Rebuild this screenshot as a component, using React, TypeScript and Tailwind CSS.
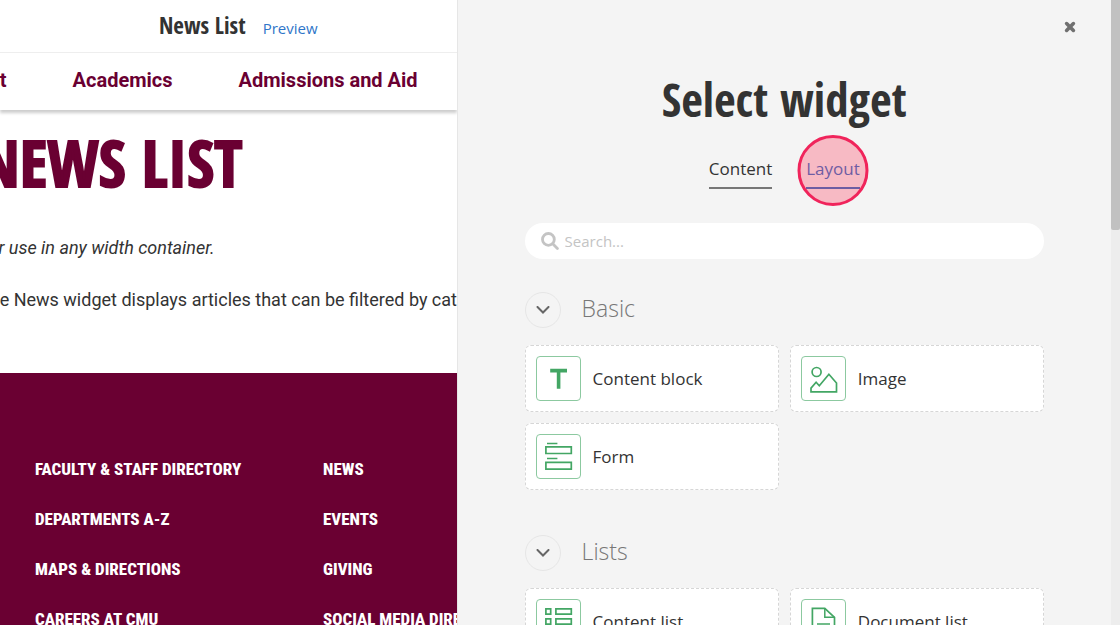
import { useState } from "react";

type IconName = "text" | "image" | "form" | "list" | "document";

type Widget = {
  name: string;
  icon: IconName;
};

type WidgetGroup = {
  title: string;
  widgets: Widget[];
};

const groups: WidgetGroup[] = [
  {
    title: "Basic",
    widgets: [
      { name: "Content block", icon: "text" },
      { name: "Image", icon: "image" },
      { name: "Form", icon: "form" },
    ],
  },
  {
    title: "Lists",
    widgets: [
      { name: "Content list", icon: "list" },
      { name: "Document list", icon: "document" },
    ],
  },
];

const footerLinks = [
  ["Faculty & Staff Directory", "Departments A-Z", "Maps & Directions", "Careers at CMU"],
  ["News", "Events", "Giving", "Social Media Directory"],
];

function WidgetIcon({ icon }: { icon: IconName }) {
  return (
    <svg viewBox="0 0 43 43" className="size-[43px]" fill="none" stroke="#43a664" strokeWidth="1.7" aria-hidden="true">
      {icon === "text" && <path d="M13.2 11.8h16.8v3.6h-6.6v16.4h-3.6V15.4h-6.6z" fill="#43a664" stroke="none" />}
      {icon === "image" && (
        <>
          <circle cx="14.6" cy="15" r="4.5" />
          <path d="M9 34.8v-3.7l5.1-5.8 3.2 3.5 9.6-11.6 7.6 8.8v8.8z" />
        </>
      )}
      {icon === "form" && (
        <>
          <path d="M10 8.5h10.4M10 23.5h10.4" strokeWidth="1.5" />
          <path d="M8.9 11.9h25.4v6.6H8.9zM8.9 27.3h25.4v6.9H8.9z" />
        </>
      )}
      {icon === "list" && (
        <>
          <path d="M8.9 8.9h4.8v5.2H8.9zM18.9 8.9h15.4v5.2H18.9z" />
          <path d="M8.9 18.9h4.8v5.2H8.9zM18.9 18.9h15.4v5.2H18.9z" />
          <path d="M8.9 28.9h4.8v5.2H8.9zM18.9 28.9h15.4v5.2H18.9z" />
        </>
      )}
      {icon === "document" && (
        <>
          <path d="M10.4 8.4h12.4l9.7 9v17H10.4z" />
          <path d="M22.8 8.4v8.8h9.5" strokeWidth="1.5" />
          <path d="M15 24h13M15 29h13" strokeWidth="1.5" />
        </>
      )}
    </svg>
  );
}

function WidgetSection({ group }: { group: WidgetGroup }) {
  const [open, setOpen] = useState(true);

  return (
    <section>
      <div className="flex items-start gap-[21px]">
        <button
          type="button"
          aria-label={`Toggle ${group.title}`}
          aria-expanded={open}
          onClick={() => setOpen(!open)}
          className="flex size-9 shrink-0 items-center justify-center rounded-full border border-[#e6e6e6]"
        >
          <svg viewBox="0 0 14 8" className="h-2 w-3.5" fill="none" stroke="#666" strokeWidth="2" aria-hidden="true">
            <path d="M1.5 1l5.5 5.5L12.5 1" strokeLinecap="round" />
          </svg>
        </button>
        <h2 className="text-[23px] leading-8 font-light text-[#777]">{group.title}</h2>
      </div>
      {open && (
        <div className="mt-[17px] grid grid-cols-2 gap-[11px]">
          {group.widgets.map((widget) => (
            <button
              key={widget.name}
              type="button"
              className="flex h-[67px] items-center gap-3 rounded-md border border-dashed border-[#d6d6d6] bg-white px-[10px] text-left text-[17px] leading-6 text-[#333]"
            >
              <span className="rounded-sm border border-[#8cc9a0]">
                <WidgetIcon icon={widget.icon} />
              </span>
              {widget.name}
            </button>
          ))}
        </div>
      )}
    </section>
  );
}

function SitePage() {
  return (
    <div className="min-w-0 flex-[457] overflow-hidden bg-white">
      <div className="flex h-[52px] items-baseline justify-end gap-[17px] pt-[9px] pr-[139px] leading-8">
        <span className="font-['Open_Sans_Condensed',sans-serif] text-[23px] font-bold text-[#333]">News List</span>
        <a href="#preview" className="text-[15px] text-[#2f76c9]">Preview</a>
      </div>
      <nav className="flex h-[58px] items-center justify-end gap-[66px] border-t border-[#eee] pr-[39px] pb-1 font-[Roboto,sans-serif] text-xl font-bold whitespace-nowrap text-[#6a0032] shadow-[0_3px_3px_rgba(0,0,0,0.2)]">
        <a href="#about">About</a>
        <a href="#academics">Academics</a>
        <a href="#admissions">Admissions and Aid</a>
      </nav>
      <main className="-ml-[21px] h-[263px] pt-5 font-[Roboto,sans-serif] text-[18px] leading-7 whitespace-nowrap text-[#333]">
        <h1 className="font-['Open_Sans_Condensed',sans-serif] text-[65px] leading-16 font-black text-[#6a0032] uppercase [-webkit-text-stroke:2px_#6a0032]">
          News List
        </h1>
        <p className="mt-10 italic">For use in any width container.</p>
        <p className="mt-6">The News widget displays articles that can be filtered by category</p>
      </main>
      <footer className="flex h-full bg-[#6a0032] px-[35px] pt-[83px] font-['Roboto_Condensed','Open_Sans_Condensed',sans-serif] text-[17px] leading-[26px] font-extrabold whitespace-nowrap text-white uppercase">
        {footerLinks.map((column) => (
          <ul key={column[0]} className="w-72 shrink-0 space-y-6">
            {column.map((link) => (
              <li key={link}>
                <a href="#footer">{link}</a>
              </li>
            ))}
          </ul>
        ))}
      </footer>
    </div>
  );
}

export default function App() {
  const [tab, setTab] = useState("Layout");
  const [search, setSearch] = useState("");

  return (
    <div className="flex h-screen overflow-hidden font-['Open_Sans',sans-serif]">
      <SitePage />

      <div className="flex min-w-0 flex-[663] border-l border-[#e6e6e6] bg-[#f4f4f4]">
        <div className="min-w-0 flex-1 overflow-hidden px-[67px]">
          <div className="-mr-9 flex h-[54px] items-center justify-end">
            <button type="button" aria-label="Close" className="p-1">
              <svg viewBox="0 0 12 12" className="size-3" stroke="#707070" strokeWidth="3.6" aria-hidden="true">
                <path d="M2.6 2.6l6.8 6.8M9.4 2.6L2.6 9.4" strokeLinecap="round" />
              </svg>
            </button>
          </div>

          <h1 className="mt-[15px] text-center font-['Open_Sans_Condensed',sans-serif] text-[47px] leading-[60px] font-bold text-[#333]">
            Select widget
          </h1>

          <div className="mt-7 flex justify-center gap-[34px] text-[17px] leading-6">
            <button
              type="button"
              onClick={() => setTab("Content")}
              className="border-b-2 border-[#777] pb-1.5 text-[#333]"
            >
              Content
            </button>
            <button
              type="button"
              onClick={() => setTab("Layout")}
              className="relative border-b-2 border-[#2f6fc4] pb-1.5 text-[#2f6fc4]"
            >
              Layout
              {tab === "Layout" && (
                <span className="pointer-events-none absolute -top-[22px] left-1/2 size-[71px] -translate-x-1/2 rounded-full border-3 border-[#f0245b] bg-[#ff3355]/30" />
              )}
            </button>
          </div>

          <label className="mt-[34px] flex h-9 items-center gap-1.5 rounded-full bg-white px-4">
            <svg viewBox="0 0 18 18" className="size-[18px] shrink-0" fill="none" stroke="#c4c4c4" strokeWidth="2.8" aria-hidden="true">
              <circle cx="7.4" cy="7.4" r="5.9" />
              <path d="M12 12l4.4 4.4" strokeLinecap="round" />
            </svg>
            <input
              type="text"
              aria-label="Search"
              placeholder="Search..."
              value={search}
              onChange={(e) => setSearch(e.target.value)}
              className="min-w-0 flex-1 text-[15px] text-[#333] outline-none placeholder:text-[#c4c4c4]"
            />
          </label>

          <div className="mt-[33px] space-y-[45px]">
            {groups.map((group) => (
              <WidgetSection key={group.title} group={group} />
            ))}
          </div>
        </div>

        <div className="w-[9px] shrink-0 bg-[#ededed]">
          <div className="h-[230px] rounded-b-xs bg-[#c1c1c1]" />
        </div>
      </div>
    </div>
  );
}
